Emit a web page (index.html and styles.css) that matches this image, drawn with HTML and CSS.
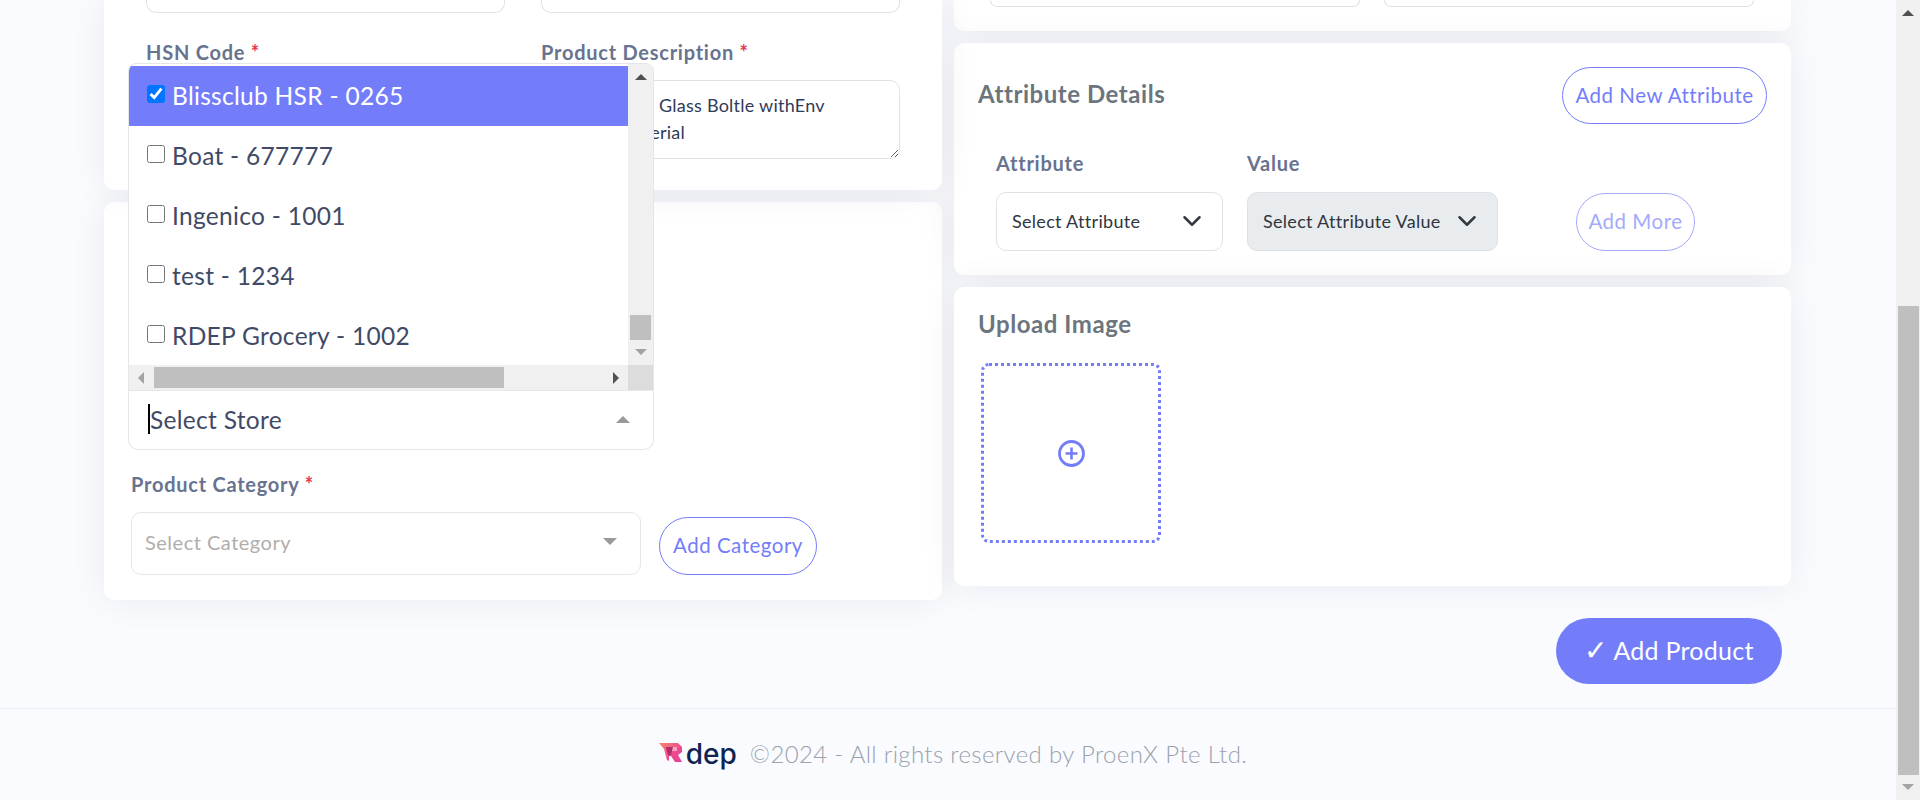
FILE: index.html
```html
<!DOCTYPE html>
<html lang="en">
<head>
<meta charset="utf-8">
<title>Add Product</title>
<link rel="stylesheet" href="styles.css">
</head>
<body>
<div class="page">
  <main class="main">
    <div class="columns">
      <div class="column">
        <section class="card card-basic">
          <div class="field-row cut-row">
            <div class="input cut"></div>
            <div class="input cut"></div>
          </div>
          <div class="field-row second-row">
            <div class="field">
              <label class="label">HSN Code <span class="req">*</span></label>
              <div class="input hsn"></div>
            </div>
            <div class="field">
              <label class="label">Product Description <span class="req">*</span></label>
              <textarea class="textarea">Premier Eco Glass Boltle withEnv
Eco Fit Material</textarea>
            </div>
          </div>
        </section>
        <section class="card card-store">
          <div class="store-select">
            <div class="dropdown">
              <div class="options">
                <div class="option selected"><input type="checkbox" class="check" checked><span>Blissclub HSR - 0265</span></div>
                <div class="option"><input type="checkbox" class="check"><span>Boat - 677777</span></div>
                <div class="option"><input type="checkbox" class="check"><span>Ingenico - 1001</span></div>
                <div class="option"><input type="checkbox" class="check"><span>test - 1234</span></div>
                <div class="option"><input type="checkbox" class="check"><span>RDEP Grocery - 1002</span></div>
              </div>
              <div class="vbar">
                <i class="tri tri-up dark"></i>
                <i class="vthumb"></i>
                <i class="tri tri-down"></i>
              </div>
              <div class="hbar">
                <i class="tri tri-left"></i>
                <i class="hthumb"></i>
                <i class="tri tri-right"></i>
              </div>
              <div class="corner"></div>
            </div>
            <span class="caret"></span>
            <span class="store-text">Select Store</span>
            <i class="tri tri-up wide"></i>
          </div>
          <label class="label cat-label">Product Category <span class="req">*</span></label>
          <div class="cat-row">
            <div class="cat-select">
              <span>Select Category</span>
              <i class="tri tri-down wide"></i>
            </div>
            <button class="btn-outline btn-cat" type="button">Add Category</button>
          </div>
        </section>
      </div>
      <div class="column">
        <section class="card card-pricing">
          <div class="input cut"></div>
          <div class="input cut"></div>
        </section>
        <section class="card card-attr">
          <div class="attr-head">
            <h2 class="title title-attr">Attribute Details</h2>
            <button class="btn-outline btn-new" type="button">Add New Attribute</button>
          </div>
          <div class="attr-row">
            <div class="attr-field attr-a">
              <label class="label">Attribute</label>
              <div class="attr-select">
                <span>Select Attribute</span>
                <svg class="chev" viewBox="0 0 16 16" width="20" height="20"><path d="m2 5 6 6 6-6" fill="none" stroke="#343a40" stroke-width="2" stroke-linecap="round" stroke-linejoin="round"/></svg>
              </div>
            </div>
            <div class="attr-field attr-v">
              <label class="label">Value</label>
              <div class="attr-select disabled">
                <span>Select Attribute Value</span>
                <svg class="chev" viewBox="0 0 16 16" width="20" height="20"><path d="m2 5 6 6 6-6" fill="none" stroke="#343a40" stroke-width="2" stroke-linecap="round" stroke-linejoin="round"/></svg>
              </div>
            </div>
            <button class="btn-outline btn-more" type="button">Add More</button>
          </div>
        </section>
        <section class="card card-upload">
          <h2 class="title">Upload Image</h2>
          <div class="dropzone">
            <svg viewBox="0 0 27 27" width="27" height="27"><circle cx="13.5" cy="13.5" r="12" fill="none" stroke="#737dfa" stroke-width="2.8"/><path d="M13.5 7.5v12M7.5 13.5h12" fill="none" stroke="#737dfa" stroke-width="2.6"/></svg>
          </div>
        </section>
      </div>
    </div>
    <div class="actions">
      <button class="btn-primary" type="button"><span class="tick">✓</span> Add Product</button>
    </div>
  </main>
  <footer class="footer">
    <span class="logo">
      <svg class="logo-mark" viewBox="0 0 24 20" width="24" height="20">
        <defs><linearGradient id="lg" x1="0" y1="0" x2="1" y2="1"><stop offset="0" stop-color="#f88a6e"/><stop offset=".6" stop-color="#ec4a8e"/><stop offset="1" stop-color="#e83e9c"/></linearGradient></defs>
        <polygon points="0,0 19,0 23,4 23,9 19,12 23,19 16,19 12,13 10,13 10,18 8,17 5,6" fill="url(#lg)"/>
        <polygon points="7,4 14,4 12,12 10,13 8,9" fill="#b42c70"/>
        <polygon points="14,4 18,4 18,8 13,8" fill="#f7a3c4"/>
      </svg>
      <span class="logo-text">dep</span>
    </span>
    <span class="copy">©2024 - All rights reserved by ProenX Pte Ltd.</span>
  </footer>
</div>
<aside class="scrollbar">
  <i class="tri tri-up dark"></i>
  <i class="page-thumb"></i>
  <i class="tri tri-down"></i>
</aside>
</body>
</html>
```
FILE: styles.css
```css
* { box-sizing: border-box; }
html, body { margin: 0; height: 800px; overflow: hidden; }
body {
  display: flex;
  background: #fafbff;
  font-family: Lato, "Noto Sans", sans-serif;
  color: #3f4b66;
}
.page { flex: 1; min-width: 0; display: flex; flex-direction: column; }
.main { padding: 0 105px 0 104px; }
.columns { display: grid; grid-template-columns: 838px 837px; gap: 12px; align-items: start; }
.column { display: flex; flex-direction: column; gap: 12px; }
.card {
  background: #fff;
  border-radius: 10px;
  box-shadow: 0 0 36px rgba(20, 25, 40, .07);
}
.card-basic { height: 190px; padding: 0 42px; border-radius: 0 0 10px 10px; position: relative; }
.field-row { display: grid; grid-template-columns: 359px 359px; gap: 36px; }
.cut-row { height: 13px; }
.input { border: 1px solid #dee2e6; border-radius: 10px; background: #fff; }
.input.cut { height: 13px; border-top: 0; border-radius: 0 0 10px 10px; }
.second-row { margin-top: 27px; }
.field { display: flex; flex-direction: column; }
.label { display: block; font-size: 20px; letter-spacing: .75px; font-weight: 700; color: #68738f; line-height: 24px; }
.req { color: #e5354f; }
.field .label { margin-bottom: 16px; }
.hsn { height: 79px; }
.textarea {
  display: block; width: 359px; height: 79px; margin: 0;
  padding: 11px 15px; border: 1px solid #dee2e6; border-radius: 10px;
  font: 18px/27px Lato, "Noto Sans", sans-serif; letter-spacing: .25px; color: #2f3b58; outline: none;
}
.card-store { height: 398px; padding: 189px 0 0 24px; }
.store-select {
  position: relative; width: 526px; height: 59px; padding: 0 0 2px 21px;
  display: flex; align-items: center;
  border: 1px solid #e4e6ea; border-top: 0; border-radius: 0 0 10px 10px;
  font-size: 24.5px; letter-spacing: .3px;
}
.caret { width: 2px; height: 30px; background: #000; flex: none; margin-left: -2px; }
.store-select .tri.wide { margin-left: auto; margin-right: 23px; }
.dropdown {
  position: absolute; left: -1px; right: -1px; bottom: 100%;
  height: 328px; z-index: 5;
  display: grid; grid-template-columns: 1fr 25px; grid-template-rows: 1fr 25px;
  background: #fff; border: 1px solid #e4e6ea;
  border-radius: 8px 8px 0 0; overflow: hidden;
}
.options { padding-top: 2px; overflow: hidden; }
.option { height: 60px; display: flex; align-items: center; gap: 7px; padding: 0 0 2px 18px; }
.option.selected { background: #737dfa; color: #fff; }
.check { width: 18px; height: 18px; margin: -2px 0 0; flex: none; }
.tri { display: block; width: 0; height: 0; flex: none; border-style: solid; border-color: transparent; }
.tri-up { border-width: 0 6px 6px; border-bottom-color: #a3a3a3; }
.tri-down { border-width: 6px 6px 0; border-top-color: #a3a3a3; }
.tri-left { border-width: 6px 6px 6px 0; border-right-color: #a3a3a3; }
.tri-right { border-width: 6px 0 6px 6px; border-left-color: #505050; }
.tri-up.dark { border-bottom-color: #505050; }
.tri-up.wide { border-width: 0 7px 7px; border-bottom-color: #999; }
.tri-down.wide { border-width: 7px 7px 0; border-top-color: #999; }
.vbar { background: #f0f0f0; display: flex; flex-direction: column; align-items: center; padding: 10px 0 10px; }
.vthumb { width: 21px; height: 25px; background: #bfbfbf; margin-top: auto; margin-bottom: 9px; }
.hbar { background: #f0f0f0; display: flex; align-items: center; padding: 0 9px; }
.hthumb { width: 350px; height: 21px; background: #bfbfbf; margin-left: 10px; margin-right: auto; }
.corner { background: #dcdcdc; }
.cat-label { margin: 22px 0 16px 3px; }
.cat-row { display: flex; align-items: flex-end; gap: 18px; margin-left: 3px; }
.cat-select {
  width: 510px; height: 63px; display: flex; align-items: center; justify-content: space-between;
  padding: 0 23px 4px 13px; border: 1px solid #e4e6ea; border-radius: 10px;
  font-size: 20px; letter-spacing: .5px; color: #b2adaa;
}
.btn-outline {
  font-family: inherit; background: #fff; color: #737dfa; letter-spacing: .5px;
  border: 1px solid #737dfa; border-radius: 30px; height: 57px; padding: 0 0 2px; flex: none; font-size: 20.5px;
}
.btn-cat { width: 158px; height: 58px; }
.btn-new { width: 205px; }
.btn-more { width: 119px; height: 58px; margin-left: 78px; opacity: .65; }
.card-pricing {
  height: 31px; padding: 0 36px; display: grid; grid-template-columns: 370px 370px; gap: 24px;
  border-radius: 0 0 10px 10px;
}
.card-pricing .input.cut { height: 7px; }
.card-attr { height: 232px; padding: 24px 24px 0 24px; }
.attr-head { display: flex; align-items: center; justify-content: space-between; }
.title { margin: 0; font-size: 24px; letter-spacing: .55px; font-weight: 700; color: #6c757d; line-height: 30px; }
.title-attr { margin-bottom: 4px; }
.attr-row { display: flex; align-items: flex-end; padding-left: 18px; margin-top: 27px; }
.attr-field { flex: none; }
.attr-a { width: 227px; margin-right: 24px; }
.attr-v { width: 251px; }
.attr-field .label { margin-bottom: 17px; }
.attr-select {
  height: 59px; display: flex; align-items: center; justify-content: space-between;
  padding: 0 20px 2px 15px; border: 1px solid #dee2e6; border-radius: 10px; background: #fff;
  font-size: 18px; letter-spacing: .3px; color: #2f3640;
}
.attr-select.disabled { background: #e9ecef; }
.card-upload { height: 299px; padding: 22px 24px 0; }
.dropzone {
  width: 180px; height: 180px; margin: 24px 0 0 3px;
  border: 3px dotted #737dfa; border-radius: 8px;
  display: flex; align-items: center; justify-content: center;
}
.actions { display: flex; justify-content: flex-end; padding: 18px 9px 24px 0; }
.btn-primary {
  width: 226px; height: 66px; border: 0; border-radius: 33px; background: #737dfa; color: #fff;
  font-family: inherit; font-size: 25px; letter-spacing: .25px; padding: 0 0 3px;
}
.tick { font-size: 28px; line-height: 1; }
.footer {
  flex: 1; border-top: 1px solid #e9ebf0;
  display: flex; align-items: center; justify-content: center; gap: 13px;
  padding: 0 0 2px 10px;
}
.logo { display: flex; align-items: center; gap: 3px; }
.logo-mark { margin-top: -2px; }
.logo-text { font-family: Inter, sans-serif; font-size: 28px; font-weight: 500; color: #0f2550; line-height: 24px; }
.copy { font-size: 24px; letter-spacing: .35px; font-weight: 300; color: #99a1ab; }
.scrollbar {
  width: 24px; flex: none; background: #f0f0f0;
  display: flex; flex-direction: column; align-items: center; padding: 10px 0 10px;
}
.page-thumb { width: 21px; height: 469px; background: #bfbfbf; margin-top: auto; margin-bottom: 9px; }
```
